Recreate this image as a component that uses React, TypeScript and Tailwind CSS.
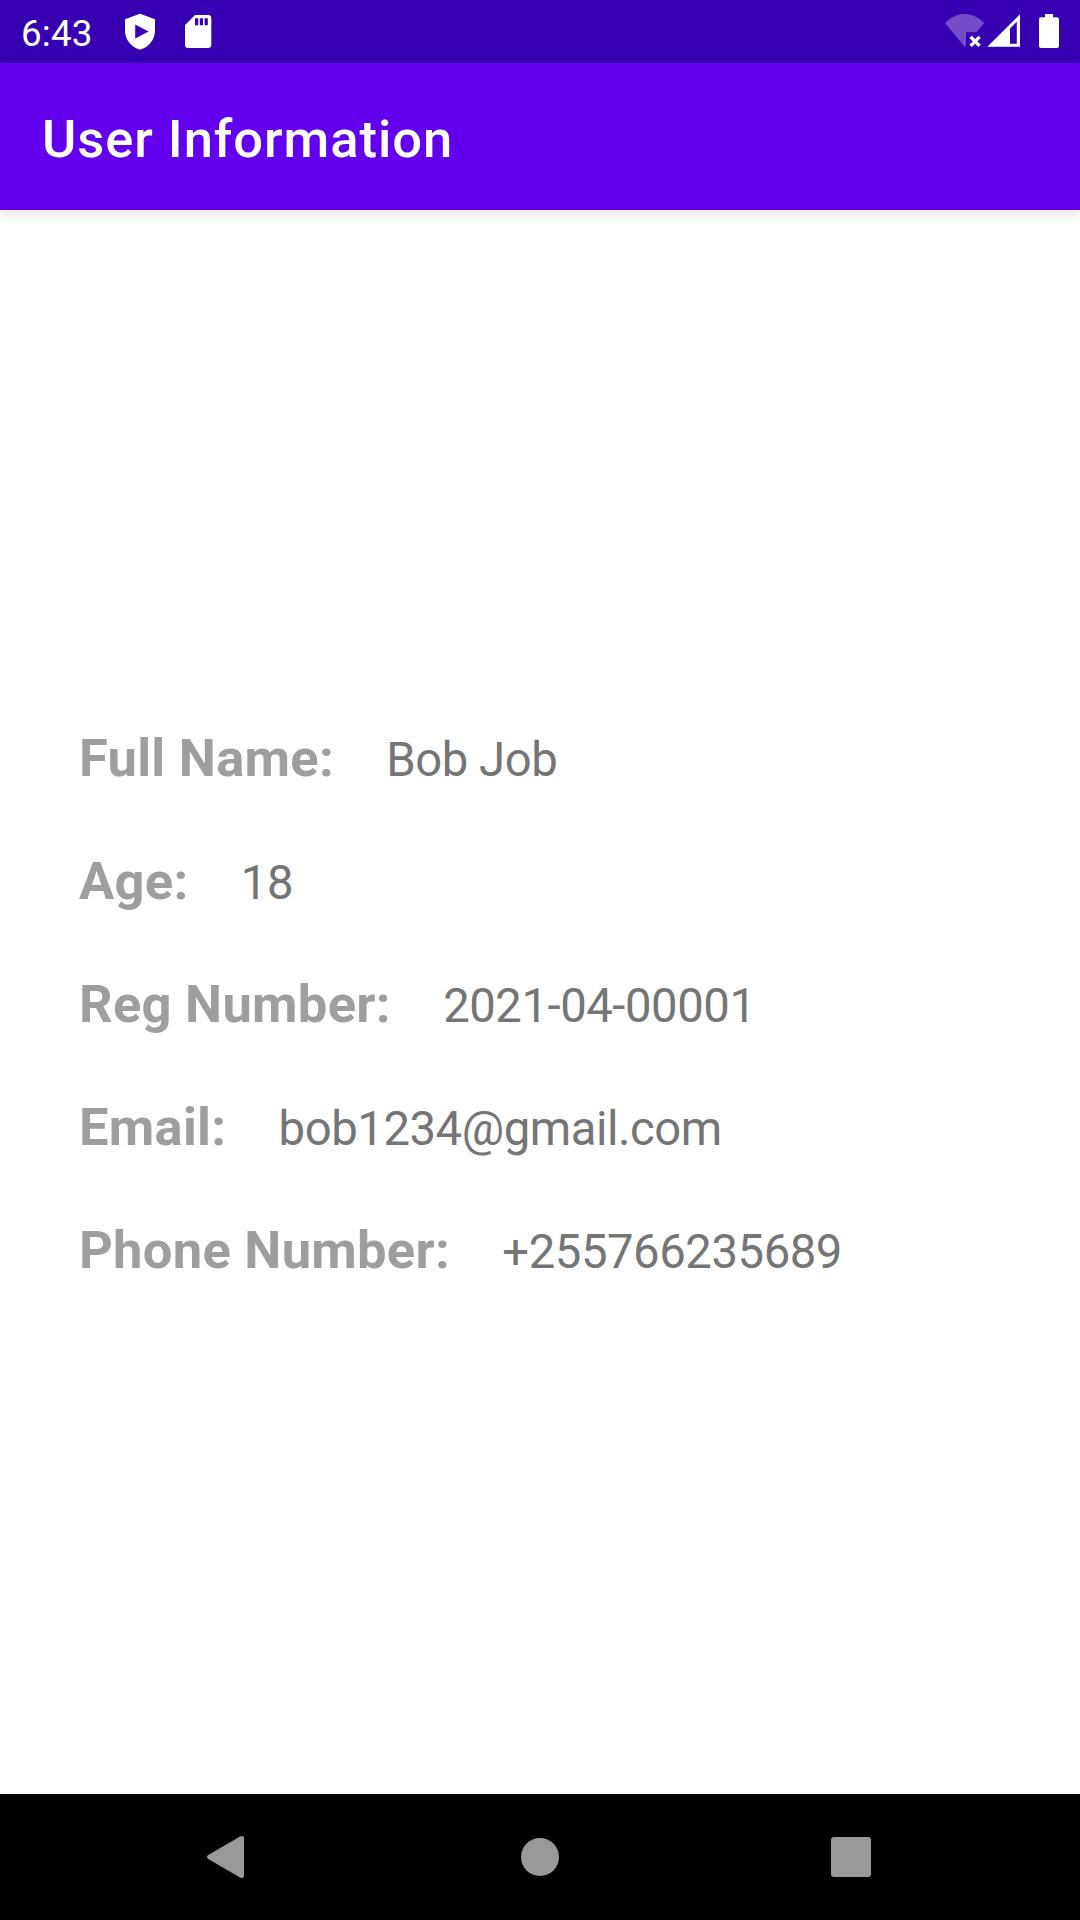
const fields = [
  { label: "Full Name:", value: "Bob Job" },
  { label: "Age:", value: "18" },
  { label: "Reg Number:", value: "2021-04-00001" },
  { label: "Email:", value: "bob1234@gmail.com" },
  { label: "Phone Number:", value: "+255766235689" },
];

function StatusBar() {
  return (
    <div className="flex h-[63px] shrink-0 items-start bg-[#3700b3] text-white">
      <span className="ml-[21px] mt-3 w-[73px] whitespace-nowrap text-[36.75px] leading-[43px] tracking-[0.2px]">6:43</span>
      <svg className="ml-[30px] mt-3" width="32" height="40" viewBox="124 12 32 40" fill="currentColor">
        <path fillRule="evenodd" d="M140 13.7 L155 19.3 V30.5 C155 39.5 148.8 47.3 140 49.8 C131.2 47.3 125 39.5 125 30.5 V19.3 Z M135.2 24.6 V38.4 L148.6 31.5 Z" />
      </svg>
      <svg className="ml-7 mt-3" width="30" height="40" viewBox="184 12 30 40" fill="currentColor">
        <path fillRule="evenodd" d="M195 15 H208.3 A3 3 0 0 1 211.3 18 V45 A3 3 0 0 1 208.3 48 H188 A3 3 0 0 1 185 45 V25 Z M195 18.3 V25.2 H198.2 V18.3 Z M199.8 18.3 V25.2 H203 V18.3 Z M204.6 18.3 V25.2 H207.8 V18.3 Z" />
      </svg>
      <svg className="ml-auto mt-3" width="42" height="40" viewBox="943 12 42 40">
        <path d="M945 23 C956.5 11 972.5 11 984.2 23 L976.5 32.2 H966 V45.2 L964.6 46.8 Z" fill="white" fillOpacity="0.3" />
        <path d="M970.6 36.9 L979.6 45.9 M979.6 36.9 L970.6 45.9" stroke="white" strokeWidth="3.4" />
      </svg>
      <svg className="ml-0.5 mt-3" width="34" height="40" viewBox="987 12 34 40" fill="currentColor">
        <path fillRule="evenodd" d="M987.3 46.8 L1020 14.2 V46.8 Z M1010 28.5 V43.7 H1016.8 V21.7 Z" />
      </svg>
      <svg className="ml-[17px] mr-5 mt-3" width="22" height="40" viewBox="1038 12 22 40" fill="currentColor">
        <path d="M1045 14 H1053 V17.3 H1057 A2 2 0 0 1 1059 19.3 V46 A2 2 0 0 1 1057 48 H1041 A2 2 0 0 1 1039 46 V19.3 A2 2 0 0 1 1041 17.3 H1045 Z" />
      </svg>
    </div>
  );
}

function NavigationBar() {
  return (
    <div className="flex h-[126px] shrink-0 items-center bg-black text-[#999999]">
      <svg className="ml-[206px]" width="40" height="44" viewBox="0 0 40 44" fill="currentColor">
        <path d="M1.8 20.3 L34 1.4 Q38 -0.2 38 3.3 V40.7 Q38 44.2 34 42.6 L1.8 23.7 Q0 22 1.8 20.3 Z" />
      </svg>
      <div className="ml-[275px] size-[38px] rounded-full bg-[#999999]" />
      <div className="ml-[272px] size-[40px] rounded-[3px] bg-[#999999]" />
    </div>
  );
}

export default function App() {
  return (
    <div className="flex h-[1920px] w-[1080px] flex-col overflow-hidden bg-white font-['Roboto',sans-serif]">
      <StatusBar />
      <header className="z-10 flex h-[147px] shrink-0 items-center bg-[#6200ee] pl-[42px] shadow-[0_4px_12px_rgba(0,0,0,0.11)]">
        <h1 className="pt-1 text-[52.5px] font-medium leading-[62px] tracking-[0.95px] text-white">User Information</h1>
      </header>
      <main className="flex grow flex-col pl-[79px] pt-[517px]">
        {fields.map(({ label, value }) => (
          <div key={label} className="flex h-[123px] items-baseline gap-[52.3px] whitespace-nowrap">
            <span className="text-[52.5px] font-bold leading-[62px] tracking-[0.27px] text-[#9e9e9e]">{label}</span>
            <span className="text-[47.25px] leading-[56px] tracking-[-0.45px] text-[#757575]">{value}</span>
          </div>
        ))}
      </main>
      <NavigationBar />
    </div>
  );
}
